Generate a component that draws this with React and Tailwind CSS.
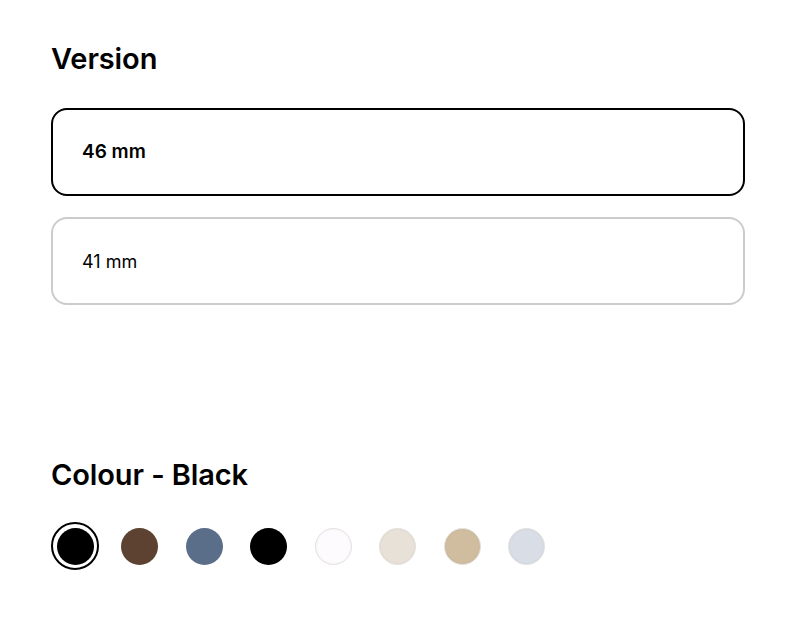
const versions = [
  { label: "46 mm", selected: true },
  { label: "41 mm", selected: false },
];

const colours = [
  { name: "Black", hex: "#000000", selected: true },
  { name: "Brown", hex: "#5d4231" },
  { name: "Blue", hex: "#5b6e89" },
  { name: "Black", hex: "#000000" },
  { name: "White", hex: "#fdfbfd", light: true },
  { name: "Cream", hex: "#e8e1d7", light: true },
  { name: "Sand", hex: "#d0bd9f", light: true },
  { name: "Silver", hex: "#d9dde5", light: true },
];

export default function App() {
  return (
    <div
      className="w-[800px] h-[620px] bg-white text-black px-[51px] pt-[41px]"
      style={{ fontFamily: "Inter, 'Noto Sans', sans-serif" }}
    >
      <h2 className="text-[29px] leading-[36px] font-semibold tracking-[-0.1px]">Version</h2>
      <div className="mt-[31px] flex flex-col gap-[21px] w-[694px]">
        {versions.map((v) => (
          <button
            key={v.label}
            className={
              v.selected
                ? "h-[88px] rounded-[16px] border-2 border-black flex items-center pl-[29px] text-[19px] font-semibold text-left"
                : "h-[88px] rounded-[16px] border-2 border-[#cccccc] flex items-center pl-[29px] text-[18px] font-normal text-left"
            }
          >
            {v.label}
          </button>
        ))}
      </div>

      <h2 className="mt-[152px] text-[29px] leading-[36px] font-semibold tracking-[-0.1px]">
        Colour - Black
      </h2>
      <div className="mt-[29px] flex gap-[16.5px]">
        {colours.map((c, i) => (
          <div key={i} className="w-12 h-12 flex items-center justify-center">
            {c.selected ? (
              <div className="w-12 h-12 rounded-full border-2 border-black flex items-center justify-center">
                <div className="w-[37px] h-[37px] rounded-full" style={{ backgroundColor: c.hex }} />
              </div>
            ) : (
              <div
                className={
                  c.light
                    ? "w-[37px] h-[37px] rounded-full border border-[#e4e2e0] shadow-[inset_0_0_2px_rgba(0,0,0,0.08)]"
                    : "w-[37px] h-[37px] rounded-full"
                }
                style={{ backgroundColor: c.hex }}
              />
            )}
          </div>
        ))}
      </div>
    </div>
  );
}
